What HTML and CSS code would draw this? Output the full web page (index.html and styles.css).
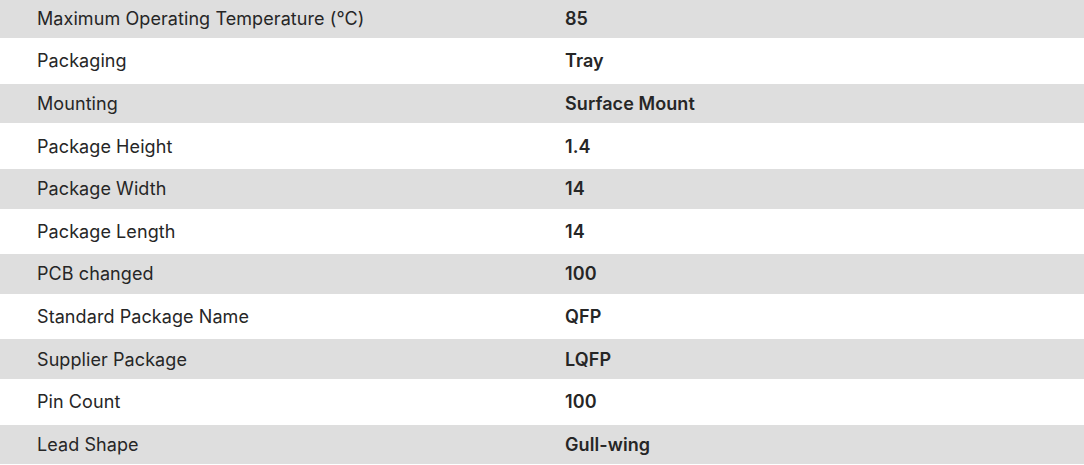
FILE: index.html
```html
<!DOCTYPE html>
<html>
<head>
<meta charset="utf-8">
<link rel="stylesheet" href="styles.css">
</head>
<body>
<div class="specs">
  <div class="row"><div class="label">Maximum Operating Temperature (°C)</div><div class="value">85</div></div>
  <div class="row"><div class="label">Packaging</div><div class="value">Tray</div></div>
  <div class="row"><div class="label">Mounting</div><div class="value">Surface Mount</div></div>
  <div class="row"><div class="label">Package Height</div><div class="value">1.4</div></div>
  <div class="row"><div class="label">Package Width</div><div class="value">14</div></div>
  <div class="row"><div class="label">Package Length</div><div class="value">14</div></div>
  <div class="row"><div class="label">PCB changed</div><div class="value">100</div></div>
  <div class="row"><div class="label">Standard Package Name</div><div class="value">QFP</div></div>
  <div class="row"><div class="label">Supplier Package</div><div class="value">LQFP</div></div>
  <div class="row"><div class="label">Pin Count</div><div class="value">100</div></div>
  <div class="row"><div class="label">Lead Shape</div><div class="value">Gull-wing</div></div>
</div>
</body>
</html>
```
FILE: styles.css
```css
html, body {
  margin: 0;
  padding: 0;
  background: #ffffff;
}
body {
  font-family: Inter, "Noto Sans", sans-serif;
  font-size: 18px;
  letter-spacing: 0.08px;
  color: #262626;
  overflow: hidden;
}
.specs {
  margin-top: -1.75px;
  display: flex;
  flex-direction: column;
}
.row {
  display: grid;
  grid-template-columns: 528px 1fr;
  align-items: center;
  padding-left: 37px;
  height: 45.5px;
}
.row:nth-child(odd) {
  background: #dedede;
  height: 39.75px;
}
.value {
  font-weight: 600;
}
```
